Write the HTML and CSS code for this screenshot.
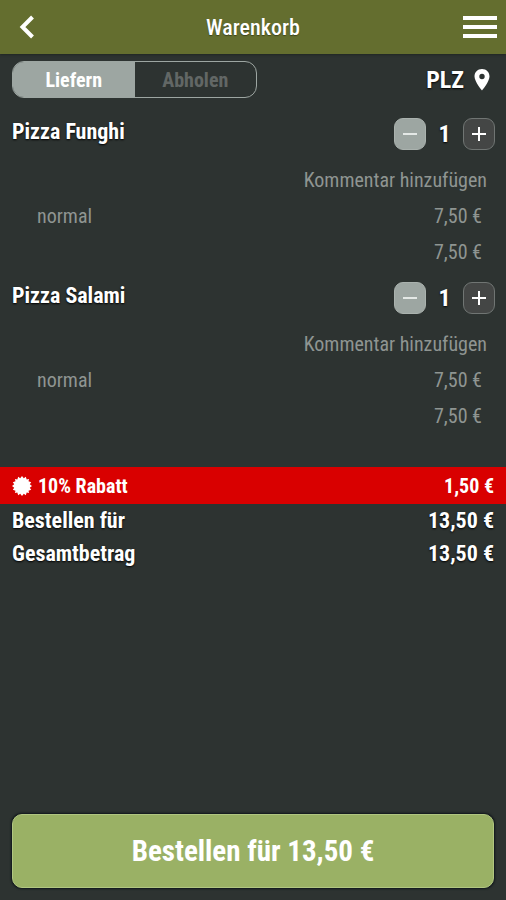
FILE: index.html
```html
<!DOCTYPE html>
<html lang="de">
<head>
    <meta charset="UTF-8">
    <meta name="viewport" content="width=device-width, initial-scale=1">
    <title>Warenkorb</title>
    <link rel="stylesheet" href="styles.css">
</head>
<body>
    <header class="topbar">
        <button type="button" class="icon-button back" aria-label="Zurück">
            <svg width="18" height="24" viewBox="0 0 18 24"><path d="M14.500 2 L4.500 12 L14.500 22" fill="none" stroke="#fff" stroke-width="4"/></svg>
        </button>
        <h1>Warenkorb</h1>
        <button type="button" class="icon-button menu" aria-label="Menü">
            <svg width="34" height="24" viewBox="0 0 34 24"><path d="M0 3h34M0 12h34M0 21h34" stroke="#fff" stroke-width="4"/></svg>
        </button>
    </header>

    <main>
        <div class="options">
            <div class="toggle">
                <button type="button" class="toggle-option active">Liefern</button>
                <button type="button" class="toggle-option">Abholen</button>
            </div>
            <button type="button" class="plz">
                PLZ
                <svg width="16" height="22" viewBox="0 0 16 22"><path fill="#fff" fill-rule="evenodd" d="M8 0C3.500 0 .5 3.300.5 7.500C.5 12.500 8 21.500 8 21.500S15.500 12.500 15.500 7.500C15.500 3.300 12.500 0 8 0ZM8 4.800a2.700 2.700 0 1 1 0 5.400a2.700 2.700 0 0 1 0-5.400Z"/></svg>
            </button>
        </div>

        <section class="item">
            <div class="item-head">
                <h2>Pizza Funghi</h2>
                <div class="quantity">
                    <button type="button" class="step minus" aria-label="Weniger"><svg width="14" height="14" viewBox="0 0 14 14"><path d="M0 7h14" stroke="#e4e8e6" stroke-width="2"/></svg></button>
                    <span class="count">1</span>
                    <button type="button" class="step" aria-label="Mehr"><svg width="14" height="14" viewBox="0 0 14 14"><path d="M0 7h14M7 0v14" stroke="#fff" stroke-width="2"/></svg></button>
                </div>
            </div>
            <a href="#" class="comment">Kommentar hinzufügen</a>
            <div class="line"><span>normal</span><span>7,50 €</span></div>
            <div class="line total">7,50 €</div>
        </section>

        <section class="item">
            <div class="item-head">
                <h2>Pizza Salami</h2>
                <div class="quantity">
                    <button type="button" class="step minus" aria-label="Weniger"><svg width="14" height="14" viewBox="0 0 14 14"><path d="M0 7h14" stroke="#e4e8e6" stroke-width="2"/></svg></button>
                    <span class="count">1</span>
                    <button type="button" class="step" aria-label="Mehr"><svg width="14" height="14" viewBox="0 0 14 14"><path d="M0 7h14M7 0v14" stroke="#fff" stroke-width="2"/></svg></button>
                </div>
            </div>
            <a href="#" class="comment">Kommentar hinzufügen</a>
            <div class="line"><span>normal</span><span>7,50 €</span></div>
            <div class="line total">7,50 €</div>
        </section>

        <div class="discount">
            <svg width="20" height="20" viewBox="-10 -10 20 20"><path fill="#fff" d="M0-10L1.800-7.800L3.800-9.200L4.700-6.500L7.100-7.100L6.500-4.700L9.200-3.800L7.800-1.800L10 0L7.800 1.800L9.200 3.800L6.500 4.700L7.100 7.100L4.700 6.500L3.800 9.200L1.800 7.800L0 10L-1.800 7.800L-3.800 9.200L-4.700 6.500L-7.100 7.100L-6.500 4.700L-9.200 3.800L-7.800 1.800L-10 0L-7.800-1.800L-9.200-3.800L-6.500-4.700L-7.100-7.100L-4.700-6.500L-3.800-9.200L-1.800-7.800Z"/></svg>
            <span>10% Rabatt</span>
            <span class="amount">1,50 €</span>
        </div>
        <div class="sum"><span>Bestellen für</span><span>13,50 €</span></div>
        <div class="sum"><span>Gesamtbetrag</span><span>13,50 €</span></div>
    </main>

    <footer>
        <button type="button" class="order">Bestellen für 13,50 €</button>
    </footer>
</body>
</html>
```
FILE: styles.css
```css
* {
    box-sizing: border-box;
}
body {
    margin: 0;
    min-height: 100vh;
    display: flex;
    flex-direction: column;
    background: #2d3331;
    color: #fff;
    font-family: "Roboto Condensed", "Liberation Sans Narrow", Roboto, sans-serif;
    font-size: 20px;
}
button {
    padding: 0;
    border: none;
    background: none;
    color: inherit;
    font: inherit;
    cursor: pointer;
}
svg {
    display: block;
}
h1, h2 {
    margin: 0;
}
main {
    flex: 1;
}
.topbar {
    display: grid;
    grid-template-columns: 1fr auto 1fr;
    align-items: center;
    height: 54px;
    padding: 0 9px;
    background: #646e2f;
    box-shadow: 0 1px 2px #202723;
}
.topbar h1 {
    font-size: 22px;
    font-weight: 500;
    text-shadow: 0 1px 1px #3d441b;
}
.icon-button.back {
    justify-self: start;
    padding-left: 9px;
}
.icon-button.menu {
    justify-self: end;
}
.options {
    display: flex;
    justify-content: space-between;
    align-items: center;
    padding: 7px 16px 18px 12px;
}
.toggle {
    display: flex;
    width: 245px;
    height: 37px;
    border: 1px solid #9da6a2;
    border-radius: 12px;
    overflow: hidden;
}
.toggle-option {
    flex: 1;
    color: #626765;
    font-weight: bold;
}
.toggle-option.active {
    background: #9da6a2;
    color: #fff;
}
.plz {
    display: flex;
    align-items: center;
    gap: 10px;
    font-size: 24px;
    font-weight: bold;
    text-shadow: 0 1px 2px #000;
}
.item {
    padding-bottom: 10px;
}
.item-head {
    display: flex;
    justify-content: space-between;
    padding: 0 11px 0 12px;
    margin-bottom: 10px;
}
.item-head h2 {
    font-size: 22px;
    line-height: 32px;
    text-shadow: 0 1px 2px #000;
}
.quantity {
    display: flex;
    align-items: center;
    height: 36px;
}
.step {
    display: grid;
    place-items: center;
    width: 32px;
    height: 32px;
    border: 1px solid #707573;
    border-radius: 9px;
    background: #444645;
}
.step.minus {
    border-color: #aab2ae;
    background: #9da6a2;
}
.count {
    width: 37px;
    text-align: center;
    font-size: 24px;
    font-weight: bold;
    text-shadow: 0 1px 2px #000;
}
.comment {
    display: block;
    padding-right: 19px;
    color: #8f9592;
    line-height: 36px;
    text-align: right;
    text-decoration: none;
}
.line {
    display: flex;
    justify-content: space-between;
    padding: 0 24px 0 37px;
    color: #8f9592;
    line-height: 36px;
}
.line.total {
    justify-content: flex-end;
}
.discount {
    display: flex;
    align-items: center;
    gap: 6px;
    height: 37px;
    margin-top: 23px;
    padding: 0 12px;
    background: #d90000;
    font-weight: bold;
}
.discount .amount {
    margin-left: auto;
}
.sum {
    display: flex;
    justify-content: space-between;
    padding: 0 12px;
    font-size: 22px;
    font-weight: bold;
    line-height: 33px;
    text-shadow: 0 1px 2px #000;
}
footer {
    padding: 12px;
}
.order {
    display: block;
    width: 100%;
    height: 74px;
    border: 1px solid #b1c681;
    border-radius: 10px;
    background: #9ab165;
    box-shadow: 0 0 2px 1px #10161a;
    font-size: 29px;
    font-weight: bold;
}
```
